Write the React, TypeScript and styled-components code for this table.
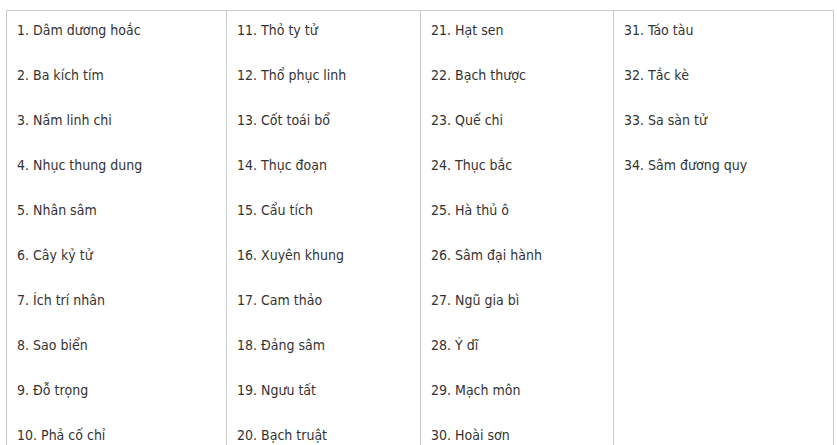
import React from 'react';
import styled, { createGlobalStyle } from 'styled-components';

const GlobalStyle = createGlobalStyle`
  body {
    margin: 0;
    background: #ffffff;
    font-family: "DejaVu Sans Condensed", "DejaVu Sans", Tahoma, sans-serif;
  }
`;

const Page = styled.div`
  padding: 10px 0 0 6px;
`;

const Table = styled.div`
  display: grid;
  grid-template-columns: 220px 194px 193px 220px;
  width: max-content;
  border-top: 1px solid #cccccc;
  border-left: 1px solid #cccccc;
`;

const Cell = styled.div`
  border-right: 1px solid #cccccc;
  border-bottom: 1px solid #cccccc;
  padding: 9px 10px 10px 10px;
  display: flex;
  flex-direction: column;
  gap: 25px;
`;

const Item = styled.div`
  font-size: 14px;
  line-height: 20px;
  color: #333333;
  white-space: nowrap;
`;

const herbs: string[] = [
  'Dâm dương hoắc', 'Ba kích tím', 'Nấm linh chi', 'Nhục thung dung', 'Nhân sâm',
  'Cây kỷ tử', 'Ích trí nhân', 'Sao biển', 'Đỗ trọng', 'Phả cố chỉ',
  'Thỏ ty tử', 'Thổ phục linh', 'Cốt toái bổ', 'Thục đoạn', 'Cẩu tích',
  'Xuyên khung', 'Cam thảo', 'Đảng sâm', 'Ngưu tất', 'Bạch truật',
  'Hạt sen', 'Bạch thược', 'Quế chi', 'Thục bắc', 'Hà thủ ô',
  'Sâm đại hành', 'Ngũ gia bì', 'Ý dĩ', 'Mạch môn', 'Hoài sơn',
  'Táo tàu', 'Tắc kè', 'Sa sàn tử', 'Sâm đương quy',
];

const columns = [0, 1, 2, 3].map(c => herbs.slice(c * 10, c * 10 + 10));

const App: React.FC = () => {
  return (
    <>
      <GlobalStyle />
      <Page>
        <Table>
          {columns.map((col, ci) => (
            <Cell key={ci}>
              {col.map((name, i) => (
                <Item key={name}>{ci * 10 + i + 1}. {name}</Item>
              ))}
            </Cell>
          ))}
        </Table>
      </Page>
    </>
  );
};

export default App;
